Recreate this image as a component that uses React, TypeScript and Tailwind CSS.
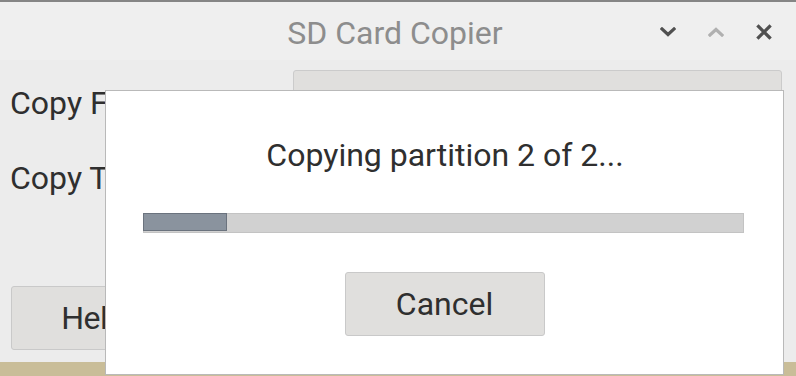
import React from "react";

function ChevronDown({ className }: { className?: string }) {
  return (
    <svg width="16" height="10" viewBox="0 0 16 10" className={className}>
      <path d="M2 2 L8 7.5 L14 2" fill="none" stroke="currentColor" strokeWidth="3.2" strokeLinecap="square" />
    </svg>
  );
}

function ChevronUp({ className }: { className?: string }) {
  return (
    <svg width="16" height="10" viewBox="0 0 16 10" className={className}>
      <path d="M2 8 L8 2.5 L14 8" fill="none" stroke="currentColor" strokeWidth="3.2" strokeLinecap="square" />
    </svg>
  );
}

function CloseIcon({ className }: { className?: string }) {
  return (
    <svg width="16" height="16" viewBox="0 0 16 16" className={className}>
      <path d="M2.5 2.5 L13.5 13.5 M13.5 2.5 L2.5 13.5" fill="none" stroke="currentColor" strokeWidth="3.2" strokeLinecap="square" />
    </svg>
  );
}

export default function App() {
  const progress = 14;
  return (
    <div
      className="relative w-[796px] h-[376px] overflow-hidden bg-[#c9bd98] text-[#2f2f2f]"
      style={{ fontFamily: "Roboto, 'Liberation Sans', sans-serif" }}
    >
      {/* Main window */}
      <div className="w-[796px] h-[362px] flex flex-col bg-[#ececec] border-t-2 border-[#858585]">
        {/* Title bar */}
        <div className="h-[58px] shrink-0 bg-[#efefef] flex items-center relative">
          <div className="flex-1 text-center text-[32px] leading-none text-[#8d8d8d] pr-[6px] pt-[3px]">SD Card Copier</div>
          <div className="absolute right-[24px] top-[22px] flex items-center gap-[32px]">
            <ChevronDown className="text-[#505050]" />
            <ChevronUp className="text-[#b0b0b0]" />
            <CloseIcon className="text-[#505050]" />
          </div>
        </div>

        {/* Body */}
        <div className="flex-1 flex flex-col pl-[10px] pr-[14px] pt-[10px]">
          <div className="flex items-center h-[60px]">
            <div className="w-[283px] text-[32px] leading-none pt-[6px]">Copy From Device:</div>
            <div className="flex-1 h-[60px] bg-[#e0dfdd] border border-[#cbcbcb] rounded-t-[3px]" />
          </div>
          <div className="flex items-center h-[60px] mt-[17px]">
            <div className="w-[283px] text-[32px] leading-none pt-[2px]">Copy To Device:</div>
            <div className="flex-1 h-[60px] bg-[#e0dfdd] border border-[#cbcbcb] rounded-[3px]" />
          </div>
          <div className="flex justify-between mt-[79px]">
            <div className="w-[164px] h-[64px] ml-[1px] bg-[#e0dfdd] border border-[#c9c9c9] rounded-[3px] flex items-center justify-center text-[32px] tracking-[-0.5px]">
              Help
            </div>
            <div className="w-[200px] h-[64px] bg-[#e0dfdd] border border-[#c9c9c9] rounded-[3px] flex items-center justify-center text-[32px]">
              Start
            </div>
          </div>
        </div>
      </div>

      {/* Progress dialog window */}
      <div className="absolute left-[105px] top-[90px] w-[679px] h-[285px] bg-white border border-[#b9b9b9] flex flex-col items-center">
        <div className="mt-[46px] h-[36px] text-[32px] leading-[36px] pl-[1px]">Copying partition 2 of 2...</div>
        <div className="mt-[40px] w-[601px] h-[20px] bg-[#d1d1d1] border border-[#c3c3c3] flex -ml-[2px]">
          <div className="h-full bg-[#8a939e] border border-[#6b737e] -m-px" style={{ width: `${progress}%` }} />
        </div>
        <div className="mt-[39px] w-[200px] h-[64px] bg-[#e0dfdd] border border-[#c9c9c9] rounded-[3px] flex items-center justify-center text-[32px]">
          Cancel
        </div>
      </div>
    </div>
  );
}
